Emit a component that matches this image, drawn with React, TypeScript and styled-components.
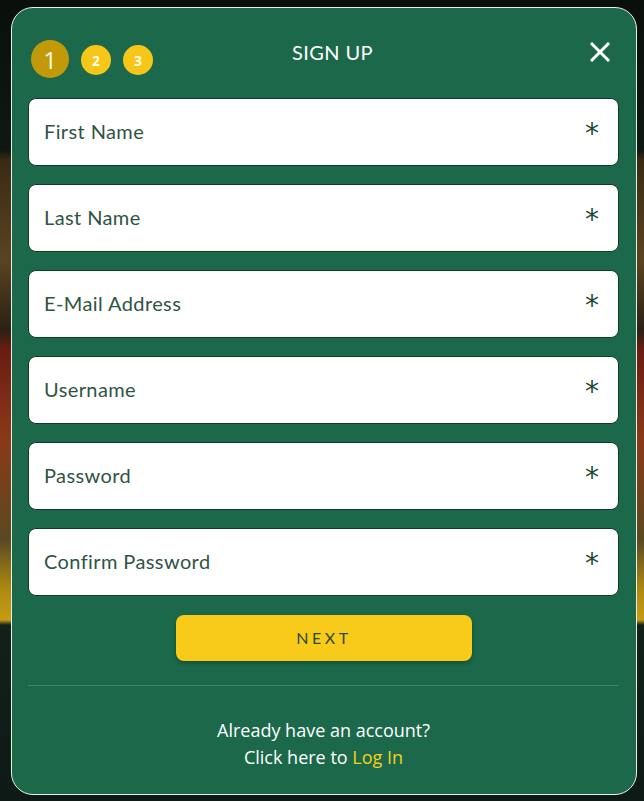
import React from "react";
import styled, { createGlobalStyle } from "styled-components";

const Global = createGlobalStyle`
  html, body { margin: 0; padding: 0; }
  body {
    width: 644px;
    height: 801px;
    overflow: hidden;
    background:
      linear-gradient(180deg, #0a0f0c 0px, #0f1812 150px, #3a2a14 160px, #5a4320 260px, #2b2116 330px, #6b1c12 350px, #8a3a18 440px, #5a4a22 540px, #b08a10 590px, #c69c14 620px, #12201a 625px, #0d1a15 801px);
    font-family: "Lato", "Open Sans", sans-serif;
  }
`;

const Page = styled.div`
  width: 644px;
  height: 801px;
  padding: 7px 8px 6px 11px;
  box-sizing: border-box;
`;

const Modal = styled.div`
  width: 626px;
  height: 788px;
  box-sizing: border-box;
  background: #1b694a;
  border: 1px solid #e8efe9;
  border-radius: 22px;
  padding: 30px 17px 0 16px;
  display: flex;
  flex-direction: column;
`;

const Header = styled.div`
  display: grid;
  grid-template-columns: 1fr auto 1fr;
  align-items: center;
  height: 42px;
  margin-bottom: 18px;
`;

const Steps = styled.div`
  display: flex;
  align-items: center;
  gap: 12px;
  padding-left: 3px;
`;

const Step = styled.div<{ $active?: boolean }>`
  width: ${(p) => (p.$active ? 38 : 30)}px;
  height: ${(p) => (p.$active ? 38 : 30)}px;
  border-radius: 50%;
  background: ${(p) => (p.$active ? "#c29a09" : "#f6c719")};
  color: #fffbe6;
  display: flex;
  align-items: center;
  justify-content: center;
  font-family: "Open Sans", sans-serif;
  font-size: ${(p) => (p.$active ? 24 : 14)}px;
  font-weight: ${(p) => (p.$active ? 400 : 700)};
  margin-top: ${(p) => (p.$active ? 0 : 2)}px;
`;

const Title = styled.div`
  color: #ffffff;
  font-family: "Lato", sans-serif;
  font-size: 20px;
  letter-spacing: 0.4px;
  margin-top: -15px;
  margin-left: 18px;
`;

const Close = styled.button`
  justify-self: end;
  background: none;
  border: none;
  padding: 0;
  margin-right: 8px;
  margin-top: -14px;
  width: 22px;
  height: 22px;
  display: flex;
  align-items: center;
  justify-content: center;
  cursor: pointer;
`;

const Fields = styled.div`
  display: flex;
  flex-direction: column;
  gap: 18px;
`;

const Field = styled.div`
  height: 68px;
  flex-shrink: 0;
  box-sizing: border-box;
  background: #ffffff;
  border: 1px solid #0f3b28;
  border-radius: 8px;
  display: flex;
  align-items: center;
  justify-content: space-between;
  padding: 0 19px 0 15px;
`;

const Placeholder = styled.span`
  color: #2f5444;
  font-size: 20px;
  font-weight: 400;
  font-family: "Lato", sans-serif;
  letter-spacing: 0.4px;
  margin-bottom: 2px;
`;

const Required = styled.span`
  color: #1e4a38;
  font-size: 28px;
  font-family: "DejaVu Sans", sans-serif;
  line-height: 1;
  margin-top: 3px;
`;

const NextButton = styled.button`
  align-self: center;
  margin-top: 19px;
  width: 296px;
  height: 46px;
  flex-shrink: 0;
  background: #f8cb1a;
  border: none;
  border-radius: 8px;
  box-shadow: 0 2px 4px rgba(0, 0, 0, 0.3);
  color: #2c4a28;
  font-family: "Lato", sans-serif;
  font-weight: 400;
  font-size: 16px;
  letter-spacing: 3.5px;
  margin-left: 1px;
  padding-bottom: 3px;
`;

const Divider = styled.hr`
  border: none;
  border-top: 1px solid #3f8566;
  margin: 24px 0 0;
  width: 100%;
`;

const Footer = styled.div`
  margin-top: 31px;
  text-align: center;
  color: #ffffff;
  font-family: "Open Sans", sans-serif;
  font-size: 18px;
  line-height: 27px;
`;

const LoginLink = styled.a`
  color: #f6cf1e;
  text-decoration: none;
`;

const fields = [
  "First Name",
  "Last Name",
  "E-Mail Address",
  "Username",
  "Password",
  "Confirm Password",
];

export default function App() {
  return (
    <>
      <Global />
      <Page>
        <Modal>
          <Header>
            <Steps>
              <Step $active>1</Step>
              <Step>2</Step>
              <Step>3</Step>
            </Steps>
            <Title>SIGN UP</Title>
            <Close aria-label="Close">
              <svg width="20" height="20" viewBox="0 0 20 20">
                <path d="M2 2 L18 18 M18 2 L2 18" stroke="#ffffff" strokeWidth="3" strokeLinecap="square" />
              </svg>
            </Close>
          </Header>
          <Fields>
            {fields.map((f) => (
              <Field key={f}>
                <Placeholder>{f}</Placeholder>
                <Required>*</Required>
              </Field>
            ))}
          </Fields>
          <NextButton>NEXT</NextButton>
          <Divider />
          <Footer>
            Already have an account?
            <br />
            Click here to <LoginLink href="#">Log In</LoginLink>
          </Footer>
        </Modal>
      </Page>
    </>
  );
}
